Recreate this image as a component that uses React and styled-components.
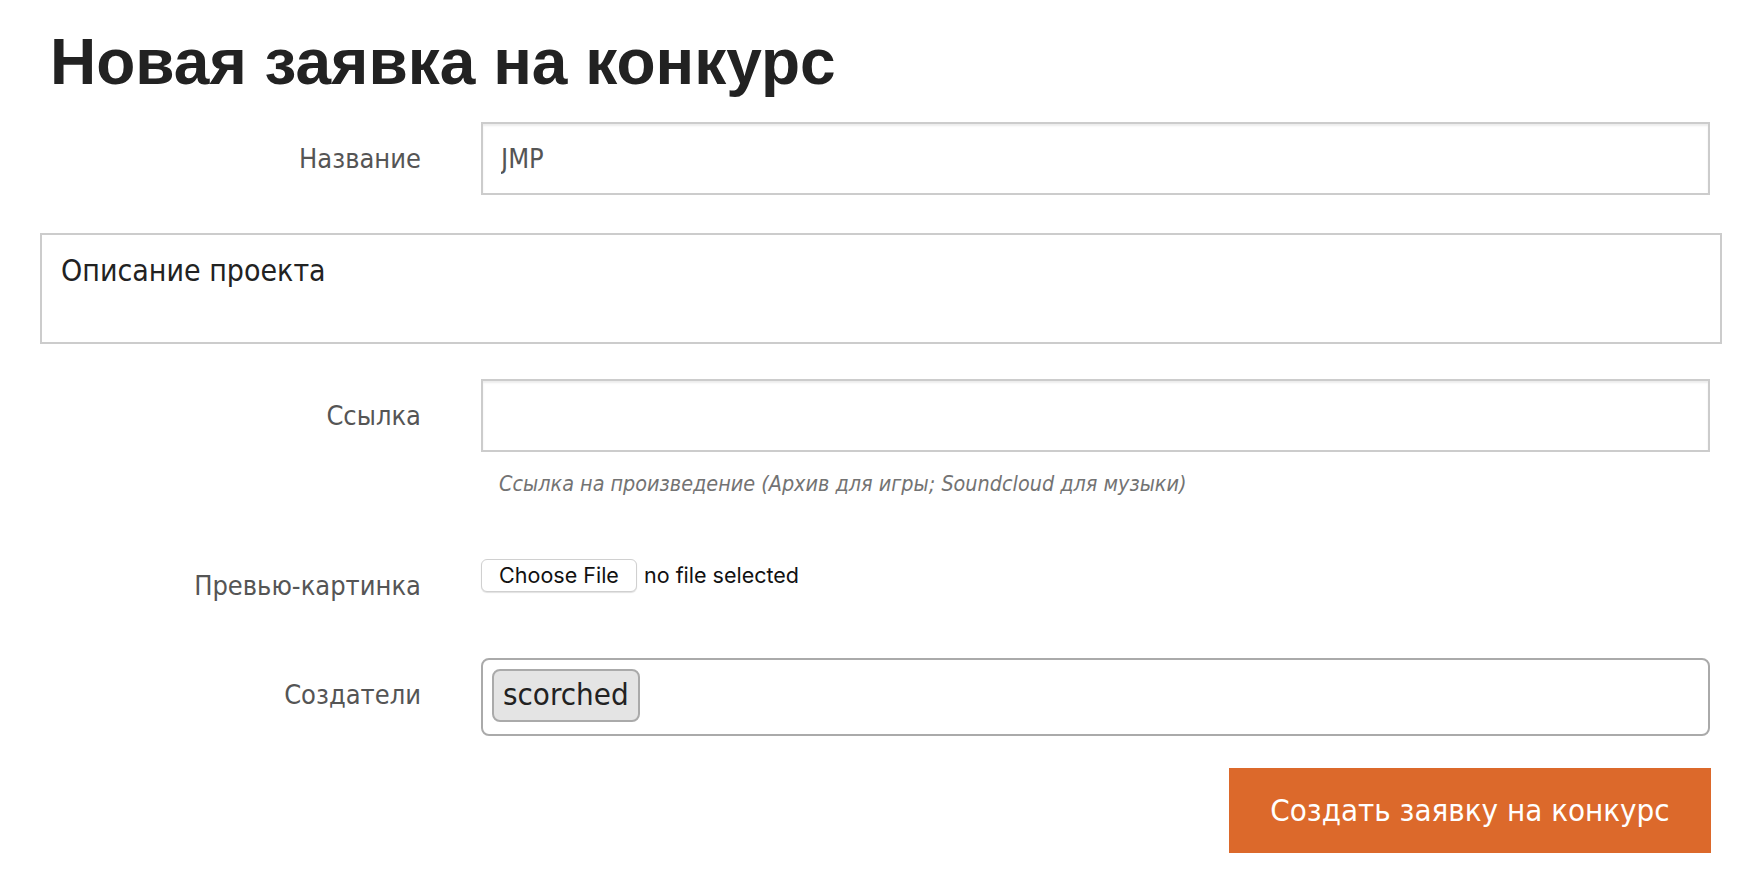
import React from "react";
import styled, { createGlobalStyle } from "styled-components";

const Global = createGlobalStyle`
  html, body { margin: 0; padding: 0; background: #fff; }
  body { font-family: "DejaVu Sans Condensed", "DejaVu Sans", sans-serif; font-stretch: condensed; }
  * { box-sizing: border-box; }
`;

const Page = styled.div`
  padding: 26px 32px 0 40px;
  width: 1754px;
`;

const Title = styled.h1`
  margin: 0 0 24px 10px;
  font-family: "Liberation Sans", Arial, sans-serif;
  font-stretch: normal;
  font-weight: 700;
  font-size: 64px;
  line-height: 72px;
  color: #222;
`;

const Form = styled.form`
  display: flex;
  flex-direction: column;
`;

const Row = styled.div`
  display: grid;
  grid-template-columns: 381px 1fr;
  column-gap: 60px;
  padding-right: 12px;
  align-items: start;
  margin-bottom: ${(p) => p.$mb || 0}px;
`;

const Label = styled.label`
  padding-top: ${(p) => p.$pt ?? 18}px;
  text-align: right;
  font-size: 27px;
  line-height: 1.4;
  color: #555;
`;

const TextInput = styled.input`
  display: block;
  width: 100%;
  height: 73px;
  padding: 0 18px;
  border: 2px solid #ccc;
  border-radius: 0;
  box-shadow: inset 0 2px 2px rgba(0, 0, 0, 0.075);
  background: #fff;
  font-family: inherit;
  font-stretch: condensed;
  font-size: 27px;
  color: #555;
  outline: none;
`;

const Description = styled.div`
  height: 111px;
  margin-bottom: 35px;
  padding: 15px 19px;
  border: 2px solid #ccc;
  font-size: 30px;
  line-height: 1.4;
  color: #222;
`;

const Help = styled.p`
  margin: 17px 0 0;
  padding-left: 18px;
  font-size: 21.4px;
  line-height: 1.4;
  font-style: italic;
  color: #737373;
`;

const FileControl = styled.div`
  display: flex;
  align-items: center;
  gap: 7px;
  font-family: Inter, "Liberation Sans", sans-serif;
  font-stretch: normal;
  font-size: 21.5px;
  color: #111;
`;

const FileButton = styled.button`
  width: 156px;
  height: 33px;
  padding: 0;
  border: 1px solid #d0d0d0;
  border-radius: 6px;
  background: #fff;
  box-shadow: 0 1px 1px rgba(0, 0, 0, 0.12);
  font: inherit;
  color: #111;
`;

const TagBox = styled.div`
  display: flex;
  align-items: flex-start;
  height: 78px;
  padding: 9px;
  border: 2px solid #aaa;
  border-radius: 8px;
  background: #fff;
`;

const Tag = styled.span`
  display: inline-block;
  height: 53px;
  padding: 0 9px;
  border: 2px solid #aaa;
  border-radius: 8px;
  background: #e4e4e4;
  font-size: 31px;
  line-height: 47px;
  color: #222;
`;

const Actions = styled.div`
  display: flex;
  justify-content: flex-end;
  padding-right: 11px;
`;

const Submit = styled.button`
  width: 482px;
  height: 85px;
  border: none;
  border-radius: 0;
  background: #dc692b;
  color: #fff;
  font-family: inherit;
  font-stretch: condensed;
  font-size: 31px;
`;

export default function App() {
  return (
    <>
      <Global />
      <Page>
        <Title>Новая заявка на конкурс</Title>
        <Form onSubmit={(e) => e.preventDefault()}>
          <Row $mb={38}>
            <Label>Название</Label>
            <TextInput defaultValue="JMP" />
          </Row>
          <Description>Описание проекта</Description>
          <Row $mb={60}>
            <Label>Ссылка</Label>
            <div>
              <TextInput defaultValue="" />
              <Help>Ссылка на произведение (Архив для игры; Soundcloud для музыки)</Help>
            </div>
          </Row>
          <Row $mb={53}>
            <Label $pt={8}>Превью-картинка</Label>
            <FileControl>
              <FileButton type="button">Choose File</FileButton>
              <span>no file selected</span>
            </FileControl>
          </Row>
          <Row $mb={32}>
            <Label>Создатели</Label>
            <TagBox>
              <Tag>scorched</Tag>
            </TagBox>
          </Row>
          <Actions>
            <Submit type="submit">Создать заявку на конкурс</Submit>
          </Actions>
        </Form>
      </Page>
    </>
  );
}
